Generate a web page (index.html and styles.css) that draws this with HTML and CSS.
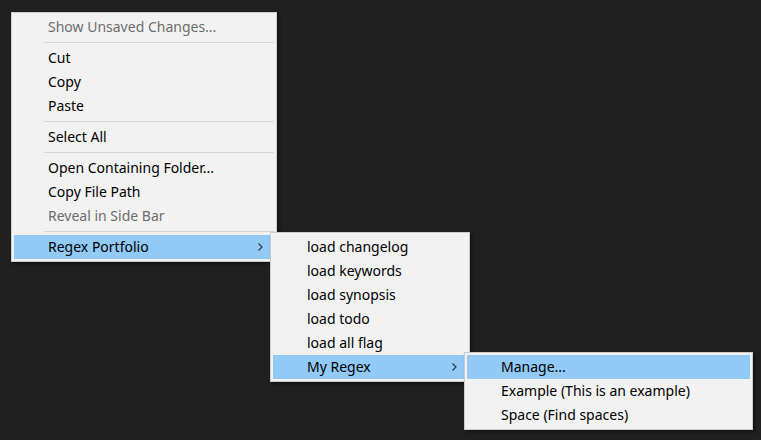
FILE: index.html
```html
<!DOCTYPE html>
<html>
<head>
<meta charset="utf-8">
<link rel="stylesheet" href="styles.css">
</head>
<body>
<div class="desk">
  <div class="menu menu-main">
    <div class="item disabled">Show Unsaved Changes...</div>
    <div class="sep"></div>
    <div class="item">Cut</div>
    <div class="item">Copy</div>
    <div class="item">Paste</div>
    <div class="sep"></div>
    <div class="item">Select All</div>
    <div class="sep"></div>
    <div class="item">Open Containing Folder...</div>
    <div class="item">Copy File Path</div>
    <div class="item disabled">Reveal in Side Bar</div>
    <div class="sep"></div>
    <div class="item active parent">Regex Portfolio
      <svg class="chev chev-main" width="5" height="8" viewBox="0 0 5 8"><polyline points="0.5,0.5 4,4 0.5,7.5" fill="none" stroke="#333" stroke-width="1.1"/></svg>
      <div class="menu menu-sub1">
        <div class="item">load changelog</div>
        <div class="item">load keywords</div>
        <div class="item">load synopsis</div>
        <div class="item">load todo</div>
        <div class="item">load all flag</div>
        <div class="item active parent">My Regex
          <svg class="chev" width="5" height="8" viewBox="0 0 5 8"><polyline points="0.5,0.5 4,4 0.5,7.5" fill="none" stroke="#333" stroke-width="1.1"/></svg>
          <div class="menu menu-sub2">
            <div class="item active">Manage...</div>
            <div class="item">Example (This is an example)</div>
            <div class="item">Space (Find spaces)</div>
          </div>
        </div>
      </div>
    </div>
  </div>
</div>
</body>
</html>
```
FILE: styles.css
```css
html, body {
  margin: 0;
  padding: 0;
  background: #202020;
  height: 100%;
  overflow: hidden;
}
.desk {
  padding: 12px 0 0 11px;
  font-family: "Noto Sans", "Open Sans", sans-serif;
  font-size: 14px;
  color: #000;
}
.menu {
  box-sizing: border-box;
  background: #f2f2f2;
  border: 1px solid #cccccc;
  padding: 2px;
  box-shadow: 2px 2px 3px rgba(0, 0, 0, 0.45);
}
.menu-main {
  width: 266px;
}
.item {
  position: relative;
  height: 24px;
  line-height: 24px;
  padding-left: 34px;
  white-space: nowrap;
}
.item.disabled {
  color: #6d6d6d;
}
.item.active {
  background: #91c9f7;
}
.sep {
  height: 1px;
  margin: 3px 0 3px 30px;
  background: #d7d7d7;
}
.chev {
  position: absolute;
  top: 8px;
  right: 10px;
  display: block;
}
.chev-main {
  right: 11px;
}
.menu-sub1 {
  position: absolute;
  z-index: 2;
  top: -3px;
  left: calc(100% - 4px);
  width: 200px;
}
.menu-sub2 {
  position: absolute;
  z-index: 3;
  top: -3px;
  left: calc(100% - 3px);
  width: 289px;
}
```
